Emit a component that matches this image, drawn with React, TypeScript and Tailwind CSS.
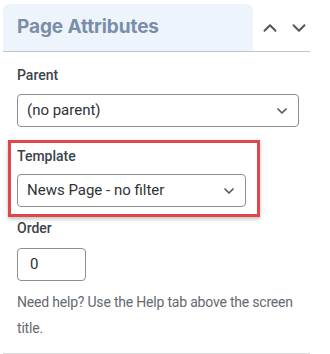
import { ChevronDown, ChevronUp } from 'lucide-react';

function Select({ value, width }: { value: string; width: string }) {
  return (
    <div className={`${width} h-[33px] flex items-center justify-between border border-[#8c8f94] rounded-[4px] pl-[9px] pr-[8px] bg-white`}>
      <span className="text-[15px] text-[#2c3338]">{value}</span>
      <ChevronDown size={16} strokeWidth={2.5} className="text-[#50575e]" />
    </div>
  );
}

export default function App() {
  return (
    <div className="w-[330px] h-[354px] bg-white font-['Roboto',sans-serif] overflow-hidden">
      <div className="ml-[3px] w-[307px] pt-[4px]">
        {/* Header */}
        <div className="flex items-center border-b border-[#c3c4c7]">
          <div className="w-[250px] h-[47px] bg-[#eef4fb] rounded-t-[6px] flex items-center pl-[14px]">
            <h2 className="font-['Inter',sans-serif] font-bold text-[19px] text-[#7a8eaa] tracking-[-0.1px]">Page Attributes</h2>
          </div>
          <div className="flex items-center gap-[7px] ml-[6px] text-[#50575e]">
            <ChevronUp size={22} strokeWidth={2.2} />
            <ChevronDown size={22} strokeWidth={2.2} />
          </div>
        </div>

        {/* Body */}
        <div className="px-[14px] pt-[14px]">
          <div className="text-[14px] font-medium text-[#3c434a] leading-[18px]">Parent</div>
          <div className="mt-[10px]">
            <Select value="(no parent)" width="w-[282px]" />
          </div>

          <div className="-ml-[9px] mt-[13px] w-[252px] border-[3px] border-[#e0474a] shadow-[0_2px_4px_rgba(0,0,0,0.25)] pl-[6px] pt-[4px] pb-[7px]">
            <div className="text-[14px] font-medium text-[#3c434a] leading-[18px]">Template</div>
            <div className="mt-[9px]">
              <Select value="News Page - no filter" width="w-[229px]" />
            </div>
          </div>

          <div className="mt-[2px] text-[14px] font-medium text-[#3c434a] leading-[18px]">Order</div>
          <div className="mt-[11px] w-[69px] h-[33px] border border-[#8c8f94] rounded-[4px] flex items-center pl-[12px] text-[15px] text-[#2c3338]">0</div>

          <p className="mt-[8px] text-[14px] tracking-[-0.2px] leading-[26px] text-[#646970] w-[292px]">
            Need help? Use the Help tab above the screen title.
          </p>
        </div>
        <div className="mt-[12px] border-b border-[#dcdcde]" />
      </div>
    </div>
  );
}
